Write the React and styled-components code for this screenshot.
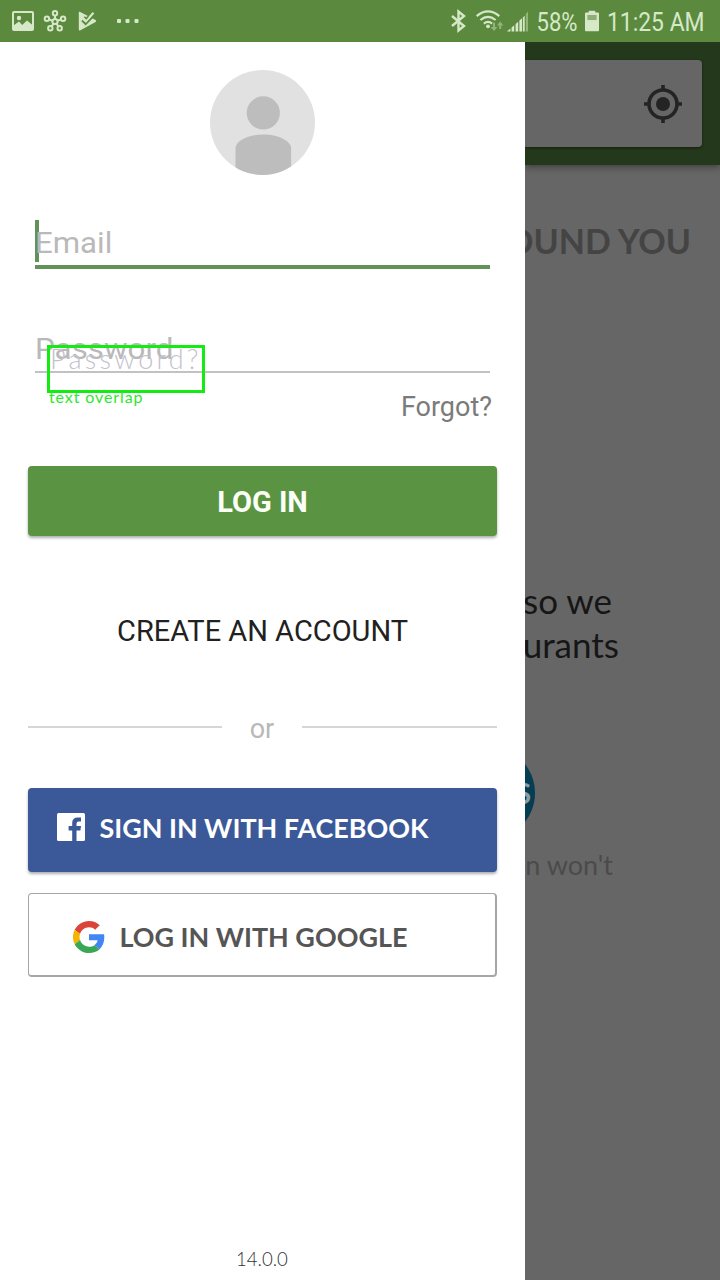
import React from "react";
import styled, { createGlobalStyle } from "styled-components";

const GlobalStyle = createGlobalStyle`
  * { box-sizing: border-box; }
  body { margin: 0; background: #fff; font-family: Roboto, "Liberation Sans", sans-serif; }
`;

const Screen = styled.div`
  width: 720px;
  height: 1280px;
  display: flex;
  flex-direction: column;
  overflow: hidden;
`;

const StatusBar = styled.header`
  height: 42px;
  flex: none;
  display: flex;
  justify-content: space-between;
  background: #5b8a3e;
  color: #d6e8c8;
`;

const StatusGroup = styled.div`
  display: flex;
  align-items: center;
  height: 42px;
`;

const Icon = styled.svg`
  display: block;
  flex: none;
  width: ${(p) => p.$w}px;
  height: ${(p) => p.$h}px;
  margin: ${(p) => p.$m || "0"};
  overflow: visible;
`;

const Text = styled.span`
  display: block;
  flex: none;
  white-space: pre;
  font-family: ${(p) => (p.$lato ? 'Lato, "Open Sans", sans-serif' : 'Roboto, "Liberation Sans", sans-serif')};
  font-size: ${(p) => p.$size}px;
  font-weight: ${(p) => p.$weight || 400};
  line-height: ${(p) => p.$lh || 40}px;
  letter-spacing: ${(p) => p.$ls || 0}px;
  color: ${(p) => p.$color || "inherit"};
  transform: scaleX(${(p) => p.$sx || 1});
  transform-origin: ${(p) => p.$origin || "left"} center;
`;

const StatusText = styled(Text)`
  width: ${(p) => p.$w}px;
  padding: 1px 0 0 ${(p) => p.$inset || 0}px;
`;

const Body = styled.div`
  flex: 1;
  display: flex;
  min-height: 0;
`;

const Drawer = styled.aside`
  width: 525px;
  flex: none;
  padding: 28px 28px 0;
  display: flex;
  flex-direction: column;
  background: #fff;
`;

const Avatar = styled(Icon)`
  align-self: center;
`;

const Field = styled.div`
  position: relative;
  margin: ${(p) => p.$top}px 7px 0;
  height: ${(p) => (p.$active ? 49 : 47)}px;
  border-bottom: ${(p) => (p.$active ? "4px solid #62915a" : "2px solid #c2c2c2")};
`;

const Caret = styled.i`
  position: absolute;
  left: 0;
  top: 0;
  width: 4px;
  height: 42px;
  background: #62915a;
`;

const OverlapMark = styled.div`
  position: absolute;
  left: 12px;
  top: 19px;
  width: 158px;
  height: 48px;
  border: 3px solid #12ec12;
`;

const GhostText = styled(Text)`
  position: absolute;
  left: 0;
  top: -9px;
`;

const MarkCaption = styled(Text)`
  position: absolute;
  left: -1px;
  top: 40px;
`;

const ForgotRow = styled.div`
  display: flex;
  justify-content: flex-end;
  margin-top: 14px;
  padding-right: 5px;
`;

const Button = styled.button`
  appearance: none;
  flex: none;
  width: 469px;
  height: ${(p) => p.$h}px;
  margin: ${(p) => p.$top}px 0 0;
  padding: ${(p) => p.$pad || "0"};
  display: flex;
  align-items: center;
  justify-content: ${(p) => (p.$start ? "flex-start" : "center")};
  border: 0 solid #a6a6a6;
  border-width: ${(p) => (p.$outlined ? "1px 2px 2px 1px" : "0")};
  border-radius: 4px;
  background: ${(p) => p.$bg};
  color: ${(p) => p.$fg};
  box-shadow: ${(p) => (p.$outlined ? "none" : "0 2px 3px rgba(0,0,0,.32)")};
`;

const ButtonLabel = styled(Text)`
  padding: ${(p) => p.$drop || 0}px 0 0 14px;
`;

const CreateLink = styled.div`
  display: flex;
  justify-content: center;
  margin-top: 75px;
`;

const Divider = styled.div`
  display: flex;
  align-items: center;
  justify-content: space-between;
  height: 40px;
  margin-top: 58px;
`;

const Rule = styled.i`
  width: ${(p) => p.$w}px;
  height: 2px;
  margin-bottom: 4px;
  background: #d6d6d6;
`;

const Version = styled.footer`
  margin: auto 0 0;
  height: 41px;
  padding-left: 208px;
`;

const Backdrop = styled.main`
  flex: 1;
  min-width: 0;
  overflow: hidden;
  display: flex;
  flex-direction: column;
  background: #666;
`;

const SearchHeader = styled.div`
  height: 123px;
  flex: none;
  padding: 18px 18px 18px 0;
  background: #24391b;
  box-shadow: 0 2px 7px rgba(0, 0, 0, 0.4);
`;

const SearchBox = styled.div`
  height: 87px;
  display: flex;
  align-items: center;
  justify-content: flex-end;
  padding-right: 19px;
  background: #666;
  border-radius: 0 4px 4px 0;
  box-shadow: 0 1px 3px rgba(0, 0, 0, 0.5);
`;

const BackLine = styled.div`
  display: flex;
  justify-content: flex-end;
  margin-top: ${(p) => p.$top}px;
  padding-right: ${(p) => p.$right}px;
`;

const Badge = styled.div`
  width: 94px;
  height: 94px;
  flex: none;
  margin: 80px 0 0 -84px;
  padding-right: 4px;
  display: flex;
  align-items: center;
  justify-content: flex-end;
  border-radius: 50%;
  background: #053e52;
`;

function PhotoIcon() {
  return (
    <Icon $w={22} $h={20} $m="0 0 0 12px" viewBox="0 0 22 20">
      <rect x="1" y="1" width="20" height="18" rx="1" fill="none" stroke="currentColor" strokeWidth="2" />
      <circle cx="7" cy="7" r="2.2" fill="currentColor" />
      <path d="M1.5 18.5V14.5L7 10.5L10.2 14L15 9.5L20.5 14V18.5Z" fill="currentColor" />
    </Icon>
  );
}

function HubIcon() {
  return (
    <Icon $w={22} $h={22} $m="0 0 0 10px" viewBox="0 0 22 22" fill="none" stroke="currentColor" strokeWidth="2">
      <circle cx="11" cy="11.5" r="2.6" />
      <circle cx="11" cy="3.2" r="2.2" />
      <circle cx="2.9" cy="8.7" r="2.2" />
      <circle cx="19.1" cy="8.7" r="2.2" />
      <circle cx="6.3" cy="18.3" r="2.2" />
      <circle cx="15.7" cy="18.3" r="2.2" />
      <path d="M11 5.4V9M5 9.4L8.5 10.7M17 9.4L13.5 10.7M7.6 16.5L9.5 13.6M14.4 16.5L12.5 13.6" />
    </Icon>
  );
}

function PlayCheckIcon() {
  return (
    <Icon $w={19} $h={20} $m="0 0 0 12px" viewBox="0 0 19 20">
      <path
        fill="currentColor"
        d="M1.8 .8L9 4.6L17.6 9.1Q18.8 10 17.6 10.9L2 19.4Q.8 19.7.8 18.4V1.6Q.8.6 1.8 .8Z"
      />
      <path d="M4 9.6L7.6 13L18 2.5" fill="none" stroke="#5b8a3e" strokeWidth="2" />
      <path d="M5.2 7.6L8 10.2L15.5 1.8" fill="none" stroke="currentColor" strokeWidth="2.2" />
      <path d="M6.3 5.8L8.3 7.6L10.4 5" fill="none" stroke="#5b8a3e" strokeWidth="1.5" />
    </Icon>
  );
}

function MoreDots() {
  return (
    <Icon $w={24} $h={4} $m="0 0 0 19px" viewBox="0 0 24 4" fill="currentColor">
      <rect x="1" width="4" height="4" rx="1" />
      <rect x="9.5" width="4" height="4" rx="1" />
      <rect x="18.5" width="4" height="4" rx="1" />
    </Icon>
  );
}

function BluetoothIcon() {
  return (
    <Icon $w={15} $h={22} viewBox="0 0 15 22" fill="none" stroke="currentColor" strokeWidth="2.4">
      <path d="M1 6L13 16L7.5 20.5V1.5L13 6L1 16" />
    </Icon>
  );
}

function WifiIcon() {
  return (
    <Icon $w={28} $h={22} $m="0 0 0 10px" viewBox="0 0 28 22">
      <g fill="none" stroke="currentColor" strokeWidth="2.2">
        <path d="M.7 6.2Q12 -3.4 23.3 6.2" />
        <path d="M4.4 10Q12 3.8 19.6 10" />
        <path d="M7.9 13.6Q12 10.2 16.1 13.6" />
      </g>
      <circle cx="12" cy="16.3" r="1.9" fill="currentColor" />
      <g opacity=".45" fill="currentColor">
        <path d="M17 12.8H19V17H21.4L18 21L14.6 17H17Z" />
        <path d="M23.2 19V15.5H21L24.2 11.5L27.4 15.5H25.2V19Z" />
      </g>
    </Icon>
  );
}

function SignalIcon() {
  return (
    <Icon $w={21} $h={21} $m="0 0 0 3px" viewBox="0 0 21 21" fill="currentColor">
      <path d="M0 20.5L3.4 17.5V20.5ZM4.6 16.5L7.2 14.3V20.5H4.6ZM8.6 13L11.2 10.8V20.5H8.6ZM12.4 9.5L15 7.2V20.5H12.4ZM15.9 6.5L17.7 4.8V20.5H15.9Z" />
      <path opacity=".45" d="M18.8 3L21 .5V20.5H18.8Z" />
    </Icon>
  );
}

function BatteryIcon() {
  return (
    <Icon $w={14} $h={22} $m="0 8px 0 7px" viewBox="0 0 15 22" fill="currentColor">
      <path d="M4 0H11V2H14Q15 2 15 3V21Q15 22 14 22H1Q0 22 0 21V3Q0 2 1 2H4Z" />
      <rect x="2.5" y="4.5" width="10" height="5.5" fill="#8fae78" />
    </Icon>
  );
}

function FacebookIcon() {
  return (
    <Icon $w={28} $h={28} viewBox="0 0 28 28">
      <rect width="28" height="28" rx="1.5" fill="#fff" />
      <path fill="#3b5998" d="M15.2 28V17.4H11.6V13H15.2V9.9Q15.2 4.4 20.8 4.4H24V8.4H21.8Q19.5 8.4 19.5 10.7V13H24L23.4 17.4H19.5V28Z" />
    </Icon>
  );
}

function GoogleIcon() {
  return (
    <Icon $w={32} $h={32} viewBox="0 0 48 48">
      <path fill="#db4437" d="M24 9.5c3.54 0 6.71 1.22 9.21 3.6l6.85-6.85C35.9 2.38 30.47 0 24 0 14.62 0 6.51 5.38 2.56 13.22l7.98 6.19C12.43 13.72 17.74 9.5 24 9.5z" />
      <path fill="#4285f4" d="M46.98 24.55c0-1.57-.15-3.09-.38-4.55H24v9.02h12.94c-.58 2.96-2.26 5.48-4.78 7.18l7.73 6c4.51-4.18 7.09-10.36 7.09-17.65z" />
      <path fill="#f4b400" d="M10.53 28.59c-.48-1.45-.76-2.99-.76-4.59s.27-3.14.76-4.59l-7.98-6.19C.92 16.46 0 20.12 0 24c0 3.88.92 7.54 2.56 10.78l7.97-6.19z" />
      <path fill="#3aa757" d="M24 48c6.48 0 11.93-2.13 15.89-5.81l-7.73-6c-2.15 1.45-4.92 2.3-8.16 2.3-6.26 0-11.57-4.22-13.47-9.91l-7.98 6.19C6.51 42.62 14.62 48 24 48z" />
    </Icon>
  );
}

function LocateIcon() {
  return (
    <Icon $w={40} $h={40} viewBox="0 0 40 40">
      <circle cx="20" cy="20" r="14" fill="none" stroke="#242424" strokeWidth="3.6" />
      <circle cx="20" cy="20" r="7" fill="#242424" />
      <path d="M20 1V6M20 34V39M1 20H6M34 20H39" stroke="#242424" strokeWidth="3.6" />
    </Icon>
  );
}

export default function App() {
  return (
    <Screen>
      <GlobalStyle />
      <StatusBar>
        <StatusGroup>
          <PhotoIcon />
          <HubIcon />
          <PlayCheckIcon />
          <MoreDots />
        </StatusGroup>
        <StatusGroup>
          <BluetoothIcon />
          <WifiIcon />
          <SignalIcon />
          <StatusText $w={50} $inset={10} $size={26} $sx={0.85}>58%</StatusText>
          <BatteryIcon />
          <StatusText $w={113} $size={26} $sx={0.88}>11:25 AM</StatusText>
        </StatusGroup>
      </StatusBar>
      <Body>
        <Drawer>
          <Avatar $w={105} $h={105} viewBox="0 0 105 105">
            <clipPath id="avatar-disc">
              <circle cx="52.5" cy="52.5" r="52.5" />
            </clipPath>
            <circle cx="52.5" cy="52.5" r="52.5" fill="#e1e1e1" />
            <g clipPath="url(#avatar-disc)" fill="#bdbdbd">
              <circle cx="53.3" cy="42.9" r="16.6" />
              <path d="M25.5 105V78C26 70.5 39 64.5 53.3 64.5S80.500 70.5 81.100 78V105Z" />
            </g>
          </Avatar>
          <Field $top={45} $active>
            <Caret />
            <Text $size={30} $sx={1.04} $lh={45} $color="#b9b9b9">Email</Text>
          </Field>
          <Field $top={57}>
            <Text $size={30} $sx={1.045} $lh={45} $color="#b9b9b9">Password</Text>
            <OverlapMark>
              <GhostText $lato $size={27} $weight={300} $ls={3.3} $lh={40} $color="#c2c2cc">Password?</GhostText>
              <MarkCaption $lato $size={16} $ls={0.9} $lh={18} $color="#2fe62f">text overlap</MarkCaption>
            </OverlapMark>
          </Field>
          <ForgotRow>
            <Text $size={27} $origin="right" $color="#7b7b7b">Forgot?</Text>
          </ForgotRow>
          <Button $h={70} $top={39} $bg="#5a9442" $fg="#fbfff6" $pad="1px 0 0">
            <Text $size={29} $weight={700} $origin="center">LOG IN</Text>
          </Button>
          <CreateLink>
            <Text $size={29} $origin="center" $color="#212121">CREATE AN ACCOUNT</Text>
          </CreateLink>
          <Divider>
            <Rule $w={194} />
            <Text $size={27} $color="#b8b8b8">or</Text>
            <Rule $w={195} />
          </Divider>
          <Button $h={84} $top={39} $bg="#3b5998" $fg="#fff" $start $pad="0 0 6px 29px">
            <FacebookIcon />
            <ButtonLabel $lato $size={26} $weight={700} $sx={1.035} $drop={2}>SIGN IN WITH FACEBOOK</ButtonLabel>
          </Button>
          <Button $h={84} $top={21} $bg="#fff" $fg="#555" $start $outlined $pad="5px 0 0 44px">
            <GoogleIcon />
            <ButtonLabel $lato $size={26} $weight={700} $sx={1.035}>LOG IN WITH GOOGLE</ButtonLabel>
          </Button>
          <Version>
            <Text $lato $size={19} $sx={0.98} $weight={300} $color="#333">14.0.0</Text>
          </Version>
        </Drawer>
        <Backdrop>
          <SearchHeader>
            <SearchBox>
              <LocateIcon />
            </SearchBox>
          </SearchHeader>
          <BackLine $top={56} $right={29}>
            <Text $lato $size={34} $weight={700} $origin="right" $color="#444">OUND YOU</Text>
          </BackLine>
          <BackLine $top={317} $right={108}>
            <Text $lato $size={35} $lh={44} $origin="right" $color="#161616">so we</Text>
          </BackLine>
          <BackLine $top={0} $right={101}>
            <Text $lato $size={35} $lh={44} $origin="right" $color="#161616">urants</Text>
          </BackLine>
          <Badge>
            <Text $lato $size={28} $weight={700} $color="#8b9ea5">S</Text>
          </Badge>
          <BackLine $top={5} $right={107}>
            <Text $lato $size={27} $origin="right" $color="#4b4b4b">n won't</Text>
          </BackLine>
        </Backdrop>
      </Body>
    </Screen>
  );
}
